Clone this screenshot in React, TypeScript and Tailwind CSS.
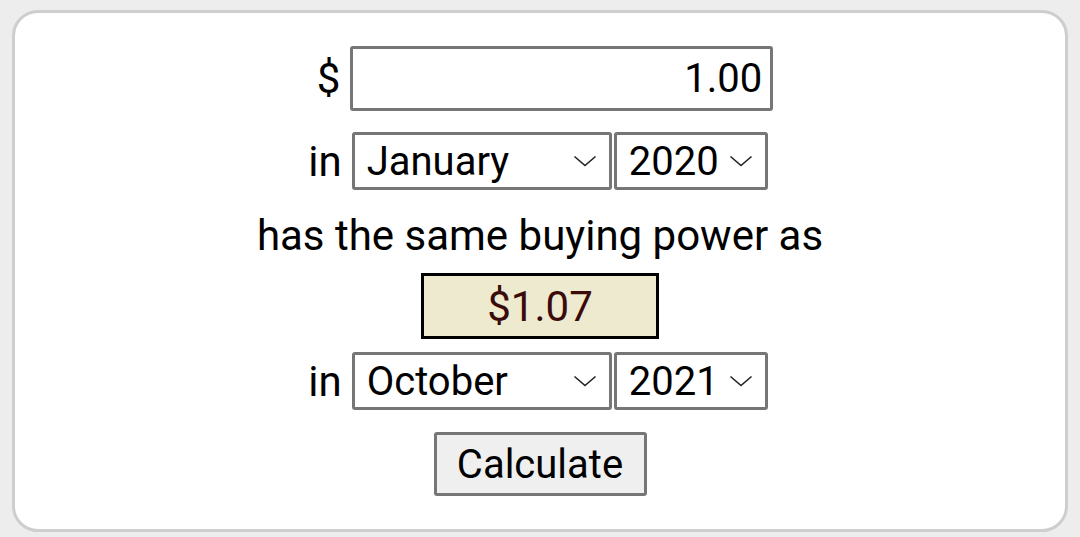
import React from "react";

function Chevron() {
  return (
    <svg width="24" height="12" viewBox="0 0 24 12" className="shrink-0">
      <path d="M1.5 1.5 L12 10.5 L22.5 1.5" fill="none" stroke="#222" strokeWidth="1.6" />
    </svg>
  );
}

function Select({ label, width }: { label: string; width: string }) {
  return (
    <div
      className={`${width} h-[58px] border-[3px] border-[#767676] rounded-[3px] bg-white flex items-center justify-between pl-[12px] pr-[12px] text-[40px]`}
    >
      <span>{label}</span>
      <Chevron />
    </div>
  );
}

export default function App() {
  return (
    <div
      className="w-[1080px] h-[537px] bg-[#ededed] pt-[10px] px-[12px] text-black text-[42px]"
      style={{ fontFamily: "Roboto, 'Liberation Sans', sans-serif" }}
    >
      <div className="h-[522px] bg-white border-[3px] border-[#cecece] rounded-[26px] flex flex-col items-center pt-[33px] leading-[49px]">
        <div className="flex items-center justify-center gap-[10px] ml-[10px]">
          <span>$</span>
          <div className="w-[423px] h-[65px] border-[3px] border-[#767676] rounded-[3px] bg-white flex items-center justify-end pr-[8px] text-[40px]">
            1.00
          </div>
        </div>
        <div className="flex items-center justify-center mt-[21px] mr-[4px]">
          <span className="mr-[10px]">in</span>
          <Select label="January" width="w-[260px]" />
          <div className="w-[2px]" />
          <Select label="2020" width="w-[154px]" />
        </div>
        <div className="mt-[21px] h-[49px]">has the same buying power as</div>
        <div className="mt-[13px] w-[238px] h-[66px] border-[3px] border-black bg-[#eeeacf] text-[#3b0b0b] flex items-center justify-center">
          $1.07
        </div>
        <div className="flex items-center justify-center mt-[13px] mr-[4px]">
          <span className="mr-[10px]">in</span>
          <Select label="October" width="w-[260px]" />
          <div className="w-[2px]" />
          <Select label="2021" width="w-[154px]" />
        </div>
        <div className="mt-[22px] w-[213px] h-[64px] border-[3px] border-[#767676] rounded-[3px] bg-[#efefef] flex items-center justify-center text-[40px]">
          Calculate
        </div>
      </div>
    </div>
  );
}
